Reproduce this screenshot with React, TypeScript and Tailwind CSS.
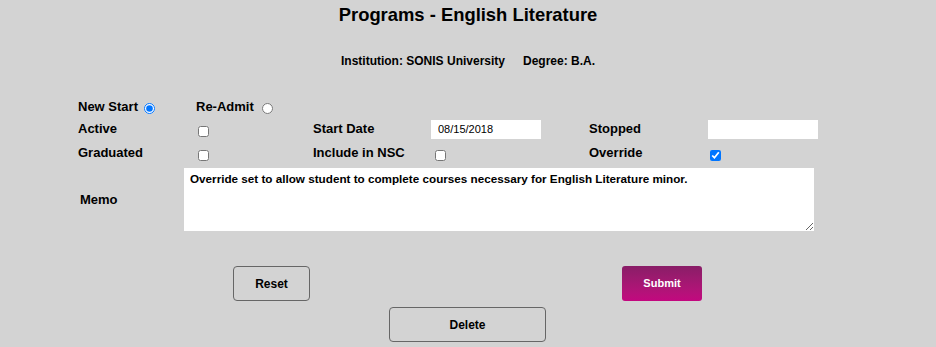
import React, { useState } from 'react';

const label = "font-['Century_Gothic','Liberation_Sans',Arial,sans-serif] text-[13px] font-bold leading-[16px] text-black";

export default function App() {
    const [startType, setStartType] = useState<'new' | 'readmit'>('new');
    const [memo, setMemo] = useState('Override set to allow student to complete courses necessary for English Literature minor.');
    const [startDate, setStartDate] = useState('08/15/2018');
    const [stopped, setStopped] = useState('');

    return (
        <div className="min-h-[347px] w-[936px] bg-[#d3d3d3] font-['Liberation_Sans',Arial,sans-serif] text-black">
            <h1 className="pt-[4px] text-center text-[18.4px] font-bold leading-[22px]">Programs - English Literature</h1>
            <div className="mt-[27px] text-center text-[12px] font-bold leading-[16px]">
                Institution: SONIS University<span className="ml-[18px]">Degree: B.A.</span>
            </div>

            {/* row 1 */}
            <div className="mt-[27px] flex h-[22px] items-center pl-[78px]">
                <div className="flex w-[118px] items-center">
                    <span className={label}>New Start</span>
                    <input
                        type="radio"
                        name="start"
                        checked={startType === 'new'}
                        onChange={() => setStartType('new')}
                        className="ml-[6px] mt-[3px] h-[11px] w-[11px]"
                    />
                </div>
                <div className="flex items-center">
                    <span className={label}>Re-Admit</span>
                    <input
                        type="radio"
                        name="start"
                        checked={startType === 'readmit'}
                        onChange={() => setStartType('readmit')}
                        className="ml-[8px] mt-[3px] h-[11px] w-[11px]"
                    />
                </div>
            </div>

            {/* row 2 */}
            <div className="flex h-[22px] items-center pl-[78px]">
                <span className={`${label} w-[120px]`}>Active</span>
                <div className="w-[115px]">
                    <input type="checkbox" className="mt-[4px] h-[11px] w-[11px] align-middle" />
                </div>
                <span className={`${label} w-[118px]`}>Start Date</span>
                <input
                    type="text"
                    value={startDate}
                    onChange={(e) => setStartDate(e.target.value)}
                    className="h-[19px] w-[110px] bg-white pl-[7px] text-[11px] text-black outline-none"
                />
                <span className={`${label} ml-[48px] w-[119px]`}>Stopped</span>
                <input
                    type="text"
                    value={stopped}
                    onChange={(e) => setStopped(e.target.value)}
                    className="h-[19px] w-[110px] bg-white pl-[7px] text-[11px] text-black outline-none"
                />
            </div>

            {/* row 3 */}
            <div className="mt-[2px] flex h-[22px] items-center pl-[78px]">
                <span className={`${label} w-[120px]`}>Graduated</span>
                <div className="w-[115px]">
                    <input type="checkbox" className="mt-[4px] h-[11px] w-[11px] align-middle" />
                </div>
                <span className={`${label} w-[122px]`}>Include in NSC</span>
                <div className="w-[154px]">
                    <input type="checkbox" className="mt-[4px] h-[11px] w-[11px] align-middle" />
                </div>
                <span className={`${label} w-[121px]`}>Override</span>
                <input type="checkbox" defaultChecked className="mt-[4px] h-[11px] w-[11px] align-middle" />
            </div>

            {/* memo */}
            <div className="mt-[4px] flex items-center pl-[80px]">
                <span className={`${label} w-[104px]`}>Memo</span>
                <textarea
                    value={memo}
                    onChange={(e) => setMemo(e.target.value)}
                    className="h-[63px] w-[630px] bg-white px-[6px] pt-[4px] text-[11.7px] font-bold leading-[14px] text-black outline-none"
                />
            </div>

            {/* buttons */}
            <div className="mt-[35px] flex pl-[233px]">
                <button
                    type="button"
                    className="h-[35px] w-[77px] rounded-[4px] border border-[#666] text-[12px] font-bold"
                >
                    Reset
                </button>
                <button
                    type="submit"
                    className="ml-[312px] h-[35px] w-[80px] rounded-[3px] bg-gradient-to-b from-[#891d67] to-[#c3077f] text-[11px] font-bold text-white"
                >
                    Submit
                </button>
            </div>
            <div className="mt-[6px] flex pl-[389px]">
                <button
                    type="button"
                    className="h-[35px] w-[157px] rounded-[4px] border border-[#666] text-[12px] font-bold"
                >
                    Delete
                </button>
            </div>
        </div>
    );
}
